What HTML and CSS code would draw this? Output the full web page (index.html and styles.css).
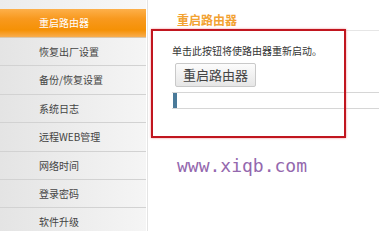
FILE: index.html
```html
<!DOCTYPE html>
<html>
<head>
<meta charset="utf-8">
<link rel="stylesheet" href="styles.css">
</head>
<body>
<div class="page">
  <ul class="menu">
    <li class="spacer"></li>
    <li class="item active">重启路由器</li>
    <li class="item">恢复出厂设置</li>
    <li class="item">备份/恢复设置</li>
    <li class="item">系统日志</li>
    <li class="item">远程WEB管理</li>
    <li class="item">网络时间</li>
    <li class="item">登录密码</li>
    <li class="item last">软件升级</li>
  </ul>
  <div class="main">
    <div class="title">重启路由器</div>
    <div class="desc">单击此按钮将使路由器重新启动。</div>
    <button class="btn">重启路由器</button>
    <div class="progress"><div class="bar"></div></div>
    <div class="mark">www.xiqb.com</div>
    <div class="highlight"></div>
  </div>
</div>
</body>
</html>
```
FILE: styles.css
```css
html, body {
  margin: 0;
  padding: 0;
  background: #ffffff;
  overflow: hidden;
}
body {
  font-family: "Noto Sans CJK SC", "Liberation Sans", sans-serif;
}
.page {
  display: flex;
  width: 379px;
  height: 231px;
  overflow: hidden;
}
.menu {
  list-style: none;
  margin: 0;
  padding: 0;
  width: 146px;
  flex: none;
  display: flex;
  flex-direction: column;
}
.spacer {
  height: 9px;
  flex: none;
  background: linear-gradient(to right, #ececec, #f8f8f8);
}
.item {
  flex: none;
  height: 27.4px;
  line-height: 27.4px;
  border-bottom: 1px solid #d2d2d2;
  padding-left: 39px;
  font-size: 10px;
  color: #444444;
  background: linear-gradient(to right, #e4e4e4, #f5f5f5);
  white-space: nowrap;
}
.item.active {
  height: 28px;
  line-height: 28px;
  color: #ffffff;
  background: linear-gradient(to bottom, #fdb04a 0%, #f8991e 35%, #f59105 75%, #f9ad4e 100%);
  border-bottom-color: #d9c7ad;
}
.item.last {
  border-bottom: none;
  flex: 1;
}
.main {
  position: relative;
  flex: 1;
  margin-left: 1px;
  border-left: 1px solid #e4e4e4;
  padding-left: 24px;
  display: flex;
  flex-direction: column;
  align-items: flex-start;
}
.title {
  align-self: stretch;
  margin-top: 13px;
  padding-left: 5px;
  padding-bottom: 3px;
  line-height: 14px;
  font-size: 12px;
  font-weight: bold;
  color: #f2a232;
  border-bottom: 1px solid #e6e6e6;
}
.desc {
  margin-top: 14px;
  font-size: 10px;
  line-height: 12px;
  color: #333333;
  white-space: nowrap;
}
.btn {
  margin: 6px 0 0 3px;
  width: 81px;
  height: 24px;
  padding: 0;
  border: 1px solid #c9c9c9;
  border-radius: 2px;
  background: linear-gradient(to bottom, #fcfcfc, #e6e6e6);
  font-family: "Noto Sans CJK SC", "Liberation Sans", sans-serif;
  font-size: 13px;
  line-height: 20px;
  color: #444444;
}
.progress {
  align-self: stretch;
  margin-top: 5px;
  height: 15px;
  border-top: 1px solid #d6d6d6;
  border-bottom: 1px solid #d6d6d6;
  display: flex;
}
.bar {
  width: 4px;
  margin-left: 1px;
  background: #4a7a99;
}
.mark {
  margin: 48px 0 0 5px;
  font-family: "DejaVu Sans Mono", "Liberation Mono", monospace;
  font-size: 18px;
  line-height: 18px;
  color: #9468ae;
  white-space: nowrap;
}
.highlight {
  position: absolute;
  left: 3px;
  top: 29px;
  width: 191px;
  height: 105px;
  border: 2px solid #c1161f;
  box-shadow: 0 0 2px rgba(235, 90, 100, 0.7);
}
```
